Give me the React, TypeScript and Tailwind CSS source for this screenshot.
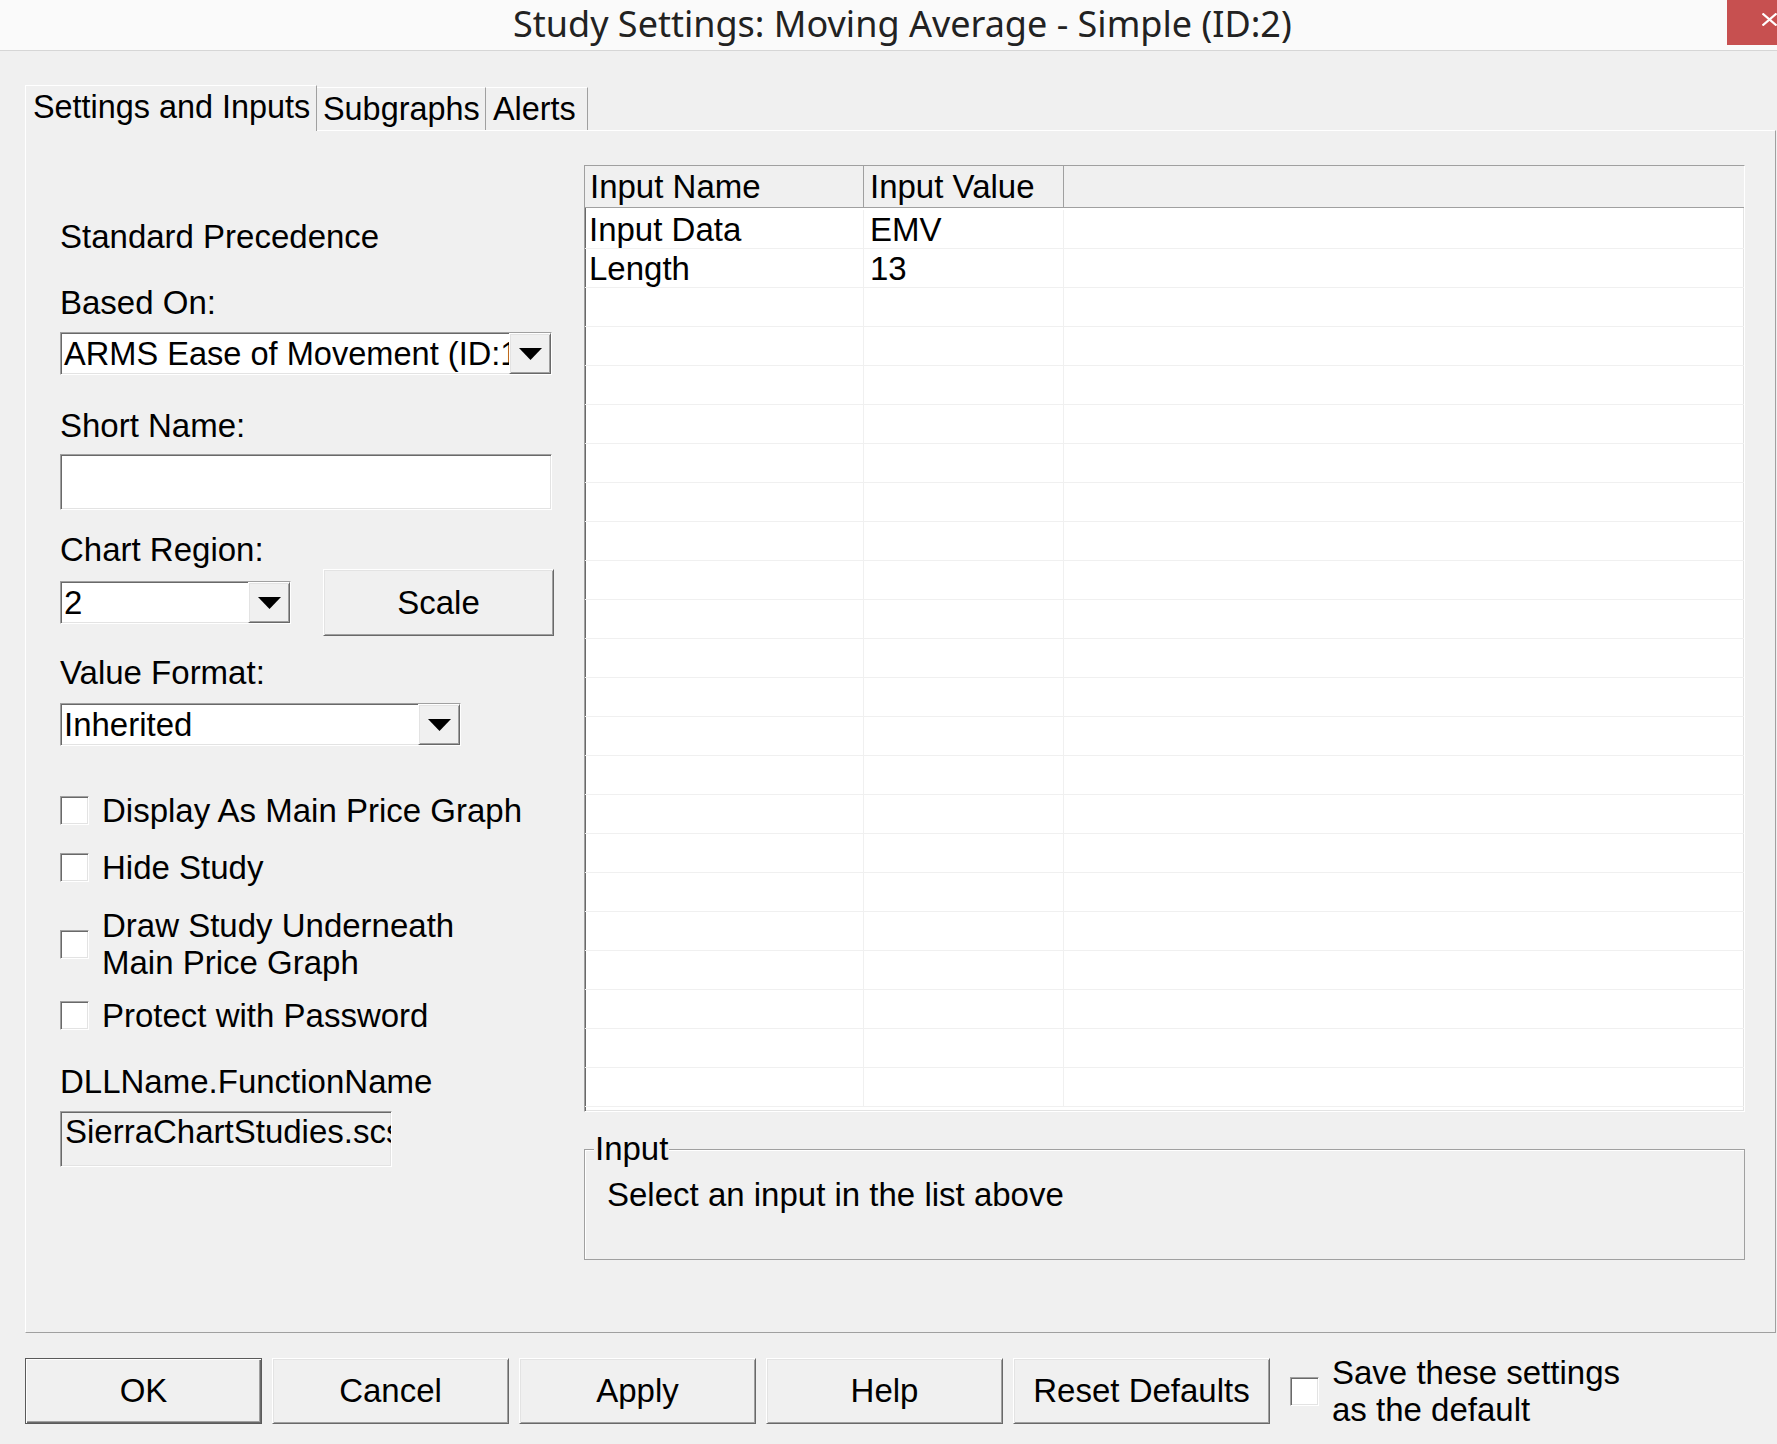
import React from 'react'

const sunken =
  'border border-t-[#a0a0a0] border-l-[#a0a0a0] border-b-white border-r-white shadow-[inset_1px_1px_0_#696969,inset_-1px_-1px_0_#e3e3e3]'
const raised =
  'border border-t-white border-l-white border-b-[#696969] border-r-[#696969] shadow-[inset_1px_1px_0_#e3e3e3,inset_-1px_-1px_0_#a0a0a0]'

function Arrow() {
  return (
    <svg width="23" height="12" viewBox="0 0 23 12">
      <polygon points="0,0 23,0 11.5,12" fill="#000" />
    </svg>
  )
}

function Combo({ value, className }: { value: string; className: string }) {
  return (
    <div className={`${sunken} ${className} h-[43px] bg-white flex`}>
      <div className="flex-1 overflow-hidden whitespace-nowrap pl-[3px] leading-[41px]">{value}</div>
      <div className={`${raised} w-[42px] h-full bg-[#f0f0f0] flex items-center justify-center shrink-0`}>
        <Arrow />
      </div>
    </div>
  )
}

function Check() {
  return <div className={`${sunken} w-[29px] h-[29px] bg-white shrink-0`} />
}

function Label({ text, className }: { text: string; className: string }) {
  return <div className={`h-[38px] leading-[38px] whitespace-nowrap ${className}`}>{text}</div>
}

function CheckRow({ lines, className }: { lines: string[]; className: string }) {
  return (
    <div className={`flex items-center gap-[13px] ${className}`}>
      <Check />
      <div className="leading-[37px]">
        {lines.map(l => (
          <div key={l} className="whitespace-nowrap">{l}</div>
        ))}
      </div>
    </div>
  )
}

function Button({ text, className, isDefault }: { text: string; className: string; isDefault?: boolean }) {
  return (
    <div
      className={`h-[66px] flex items-center justify-center bg-[#f0f0f0] ${
        isDefault
          ? 'border border-[#5a5a5a] shadow-[inset_1px_1px_0_#fff,inset_-1px_-1px_0_#696969,inset_-2px_-2px_0_#a0a0a0]'
          : raised
      } ${className}`}
    >
      {text}
    </div>
  )
}

const rows: [string, string][] = [
  ['Input Data', 'EMV'],
  ['Length', '13'],
  ...Array.from({ length: 21 }, (): [string, string] => ['', '']),
]

export default function App() {
  return (
    <div className="w-[1777px] h-[1444px] bg-[#f0f0f0] overflow-hidden text-black text-[33px] font-['Liberation_Sans',Arial,sans-serif]">
      {/* title bar */}
      <div className="h-[51px] bg-[#fafafa] border-b border-[#d6d6d6] flex">
        <div className="flex-1 pl-[513px] leading-[48px] text-[36px] text-[#222] font-['Noto_Sans',sans-serif] whitespace-nowrap">
          Study Settings: Moving Average - Simple (ID:2)
        </div>
        <div className="w-[50px] h-[45px] bg-[#c75050] shrink-0 pl-[35px] pt-[13px]">
          <svg width="15" height="13" viewBox="0 0 15 13">
            <path d="M0.5 0.5 L14.5 12.5 M14.5 0.5 L0.5 12.5" stroke="#fff" strokeWidth="2.2" fill="none" />
          </svg>
        </div>
      </div>

      {/* tabs */}
      <div className="mt-[34px] pl-[25px] flex items-end h-[45px] relative z-10 text-[32.4px]">
        <div className="h-[46px] w-[292px] -mb-px bg-[#f0f0f0] border-l border-t border-white border-r border-r-[#a0a0a0] pl-[7px] pt-[2px] leading-[38px] whitespace-nowrap">
          Settings and Inputs
        </div>
        <div className="h-[43px] w-[169px] border-t border-white border-r border-r-[#a0a0a0] pl-[6px] pt-[2px] leading-[38px]">
          Subgraphs
        </div>
        <div className="h-[43px] w-[102px] border-t border-white border-r border-r-[#a0a0a0] pl-[7px] pt-[2px] leading-[38px]">
          Alerts
        </div>
      </div>

      {/* tab panel */}
      <div className="ml-[25px] w-[1751px] h-[1203px] border-l border-t border-white border-r border-b border-r-[#a0a0a0] border-b-[#a0a0a0] flex">
        {/* left column */}
        <div className="w-[558px] pl-[34px] flex flex-col shrink-0">
          <Label text="Standard Precedence" className="mt-[87px]" />
          <Label text="Based On:" className="mt-[28px]" />
          <Combo value="ARMS Ease of Movement (ID:1)" className="w-[492px] mt-[10px] text-[32.6px]" />
          <Label text="Short Name:" className="mt-[32px]" />
          <div className={`${sunken} w-[492px] h-[56px] bg-white mt-[9px]`} />
          <Label text="Chart Region:" className="mt-[21px]" />
          <div className="flex items-center gap-[32px] h-[67px]">
            <Combo value="2" className="w-[231px]" />
            <Button text="Scale" className="w-[231px] h-[67px]" />
          </div>
          <Label text="Value Format:" className="mt-[18px]" />
          <Combo value="Inherited" className="w-[401px] mt-[11px]" />
          <CheckRow lines={['Display As Main Price Graph']} className="mt-[45px] h-[38px]" />
          <CheckRow lines={['Hide Study']} className="mt-[19px] h-[38px]" />
          <CheckRow lines={['Draw Study Underneath', 'Main Price Graph']} className="mt-[20px] h-[76px]" />
          <CheckRow lines={['Protect with Password']} className="mt-[14px] h-[38px]" />
          <Label text="DLLName.FunctionName" className="mt-[29px]" />
          <div className={`${sunken} w-[332px] h-[56px] bg-[#f0f0f0] mt-[10px] overflow-hidden whitespace-nowrap pl-[4px] leading-[40px]`}>
            SierraChartStudies.scsf_SimpleMovAvg
          </div>
        </div>

        {/* right column */}
        <div className="w-[1161px] mt-[34px] flex flex-col shrink-0">
          <div className={`${sunken} h-[947px] bg-white overflow-hidden flex flex-col`}>
            <div className="h-[42px] shrink-0 bg-[#f0f0f0] border-b border-[#a0a0a0] flex">
              <div className="w-[279px] border-r border-[#a0a0a0] pl-[5px] leading-[42px]">Input Name</div>
              <div className="w-[200px] border-r border-[#a0a0a0] pl-[6px] leading-[42px]">Input Value</div>
              <div className="flex-1" />
            </div>
            <div className="h-[2px] shrink-0" />
            {rows.map(([name, value], i) => (
              <div key={i} className="h-[39px] shrink-0 border-b border-[#f0f0f0] flex">
                <div className="w-[279px] border-r border-[#f0f0f0] pl-[4px] leading-[40px]">{name}</div>
                <div className="w-[200px] border-r border-[#f0f0f0] pl-[6px] leading-[40px]">{value}</div>
                <div className="flex-1" />
              </div>
            ))}
          </div>

          <div className="relative mt-[37px] h-[111px] border border-[#a0a0a0] shadow-[inset_1px_1px_0_#fff]">
            <span className="absolute left-[9px] top-[-20px] px-[1px] bg-[#f0f0f0] leading-[38px]">Input</span>
            <div className="pl-[22px] pt-[26px] leading-[38px]">Select an input in the list above</div>
          </div>
        </div>
      </div>

      {/* bottom buttons */}
      <div className="mt-[21px] pl-[25px] flex items-center gap-[10px]">
        <Button text="OK" className="w-[237px]" isDefault />
        <Button text="Cancel" className="w-[237px]" />
        <Button text="Apply" className="w-[237px]" />
        <Button text="Help" className="w-[237px]" />
        <Button text="Reset Defaults" className="w-[257px]" />
        <div className="ml-[10px] flex items-center gap-[13px]">
          <Check />
          <div className="leading-[37px]">
            <div>Save these settings</div>
            <div>as the default</div>
          </div>
        </div>
      </div>
    </div>
  )
}
